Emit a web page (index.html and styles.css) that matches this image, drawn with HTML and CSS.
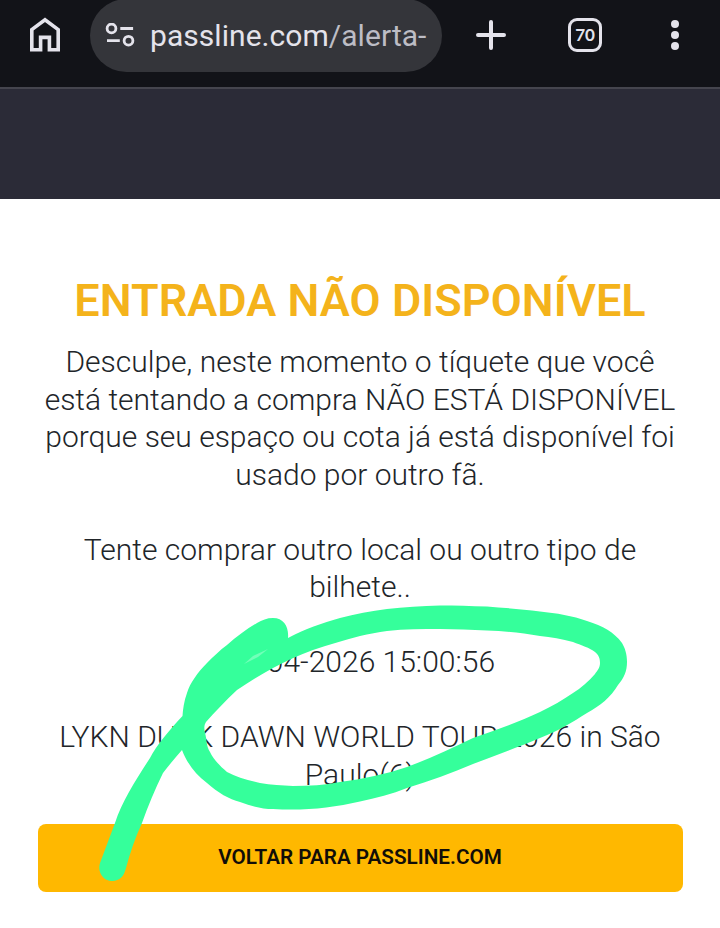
FILE: index.html
```html
<!DOCTYPE html>
<html lang="pt-BR">
<head>
<meta charset="utf-8">
<title>Passline</title>
<link rel="stylesheet" href="styles.css">
</head>
<body>
<header class="browser-bar">
  <svg class="home" width="32" height="36" viewBox="0 0 32 36" fill="none" stroke="currentColor" stroke-width="3.6"><path d="M2.8 32.8V12.6L16 2.8l13.2 9.8v20.2h-8.8V20.4h-8.8v12.4z"/></svg>
  <div class="address">
    <svg class="tune" width="30" height="26" viewBox="0 0 30 26" fill="none" stroke="currentColor" stroke-width="2.8"><circle cx="6.5" cy="5.500" r="4.4"/><path d="M15.3 5.500h12.8M2 17.700h12.8"/><circle cx="23.5" cy="17.7" r="4.4"/></svg>
    <span class="url">passline.com<span class="path">/alerta-</span></span>
  </div>
  <svg class="plus" width="32" height="32" viewBox="0 0 32 32" fill="none" stroke="currentColor" stroke-width="4" stroke-linecap="round"><path d="M16 3v26M3 16h26"/></svg>
  <div class="tabs">70</div>
  <svg class="more" width="10" height="32" viewBox="0 0 10 32" fill="currentColor"><circle cx="5" cy="5" r="4"/><circle cx="5" cy="16" r="4"/><circle cx="5" cy="27" r="4"/></svg>
</header>
<div class="site-header"></div>
<main class="notice">
  <h1>ENTRADA NÃO DISPONÍVEL</h1>
  <p>Desculpe, neste momento o tíquete que você<br>está tentando a compra NÃO ESTÁ DISPONÍVEL<br>porque seu espaço ou cota já está disponível foi<br>usado por outro fã.</p>
  <p>Tente comprar outro local ou outro tipo de<br>bilhete..</p>
  <p>21-04-2026 15:00:56</p>
  <p>LYKN DUSK DAWN WORLD TOUR 2026 in São<br>Paulo(6)</p>
  <a class="back">VOLTAR PARA PASSLINE.COM</a>
</main>
<svg class="marker" width="720" height="928" viewBox="0 0 720 928" fill="currentColor" fill-rule="evenodd">
  <path d="M273 618C267 618 262 620 257 623C247 629 237 636 227 645C220 650 213 657 207 663C198 672 190 683 187 693C184 701 183 709 182.500 716C171 728 156 746 150 758C137 778 122 801 115 823L100 863C97 873 104 881 112 881C120 881 124 876 126 868C130 853 135 838 142 823C148 806 155 789 163 773C169 765 176 757 182 750C187 763 195 774 207 783C218 793 229 799 240 802C251 806 262 809 273 809C303 811 332 808 360 801.500C376 798 392 794 407 788C430 781 452 773 473 764C496 755 519 747 540 738C558 731 573 722 587 713C600 706 611 697 618 685C624 678 627 671 627 662C627 654 625 648 622 643C614 632 603 626 587 621C573 616 556 613 540 611.500C522 609 504 608 487 606.500C471 606 455 605.500 440 605.500C422 606 404 607 387 609C371 611 355 614 340 618C322 623 305 629 288 638C289 627 284 618 273 618ZM206 722C215 712 225 701 237 690C249 682 260 675 273 668C286 661 299 655 313 650C328 645 344 640 360 636C369 634 378 632 387 631C405 629 422 629 440 629C456 629 471 630 487 630.500C506 631 523 633 540 636C551 637 562 639 573 642C581 645 590 648 595 652C599 655 600 659 600 663C600 668 597 671 595 674C589 681 581 688 573 693C563 700 552 706 540 712C519 722 496 730 473 738C452 748 429 759 407 767C386 774 363 779 340 782C325 785 309 786 293 786C282 785 271 785 260 783C247 780 236 777 227 772C220 766 213 759 210 752C206 746 207 740 205 733C204 729 204 725 206 722Z"/>
  <path class="gap" d="M244 664L253 656L268 649L258 657Z"/>
</svg>
</body>
</html>
```
FILE: styles.css
```css
* { box-sizing: border-box; }
body { margin: 0; width: 720px; height: 928px; overflow: hidden; position: relative; background: #fff; font-family: Roboto, "Liberation Sans", sans-serif; }
.browser-bar { display: flex; align-items: center; height: 89px; padding: 0 40px 17px 29px; background: #121318; border-bottom: 2px solid #45454e; color: #e4e3eb; }
.home { flex: none; }
.address { display: flex; align-items: center; flex: none; align-self: flex-start; width: 352px; height: 73px; margin: -1px 0 0 29px; padding-left: 15px; border-radius: 37px; background: #34353a; }
.tune { flex: none; margin-right: 15px; }
.url { font-size: 30px; letter-spacing: 0.05px; white-space: nowrap; }
.path { color: #bdbdc5; }
.plus { flex: none; margin-left: 33px; }
.tabs { flex: none; width: 34px; height: 34px; margin-left: 61px; border: 3.5px solid; border-radius: 9px; font: 700 17px/27px Lato, sans-serif; text-align: center; }
.more { flex: none; margin-left: 68px; }
.site-header { height: 110px; background: #2b2b37; }
.notice { padding: 75px 37.5px 0; text-align: center; }
h1 { margin: 0 0 15px; color: #f4b31b; font-size: 45px; line-height: 54px; font-weight: 600; letter-spacing: 0.05px; white-space: nowrap; }
p { margin: 0 0 37.5px; color: #212529; font-size: 30px; line-height: 37.5px; font-weight: 300; white-space: nowrap; }
.back { display: block; height: 68px; margin-top: -7px; border-radius: 8px; background: #ffb800; color: #110d08; font-size: 20.7px; line-height: 67px; font-weight: 600; }
.marker { position: absolute; left: 0; top: 0; color: #35ff9b; }
.gap { fill: #72ffb9; }
```
